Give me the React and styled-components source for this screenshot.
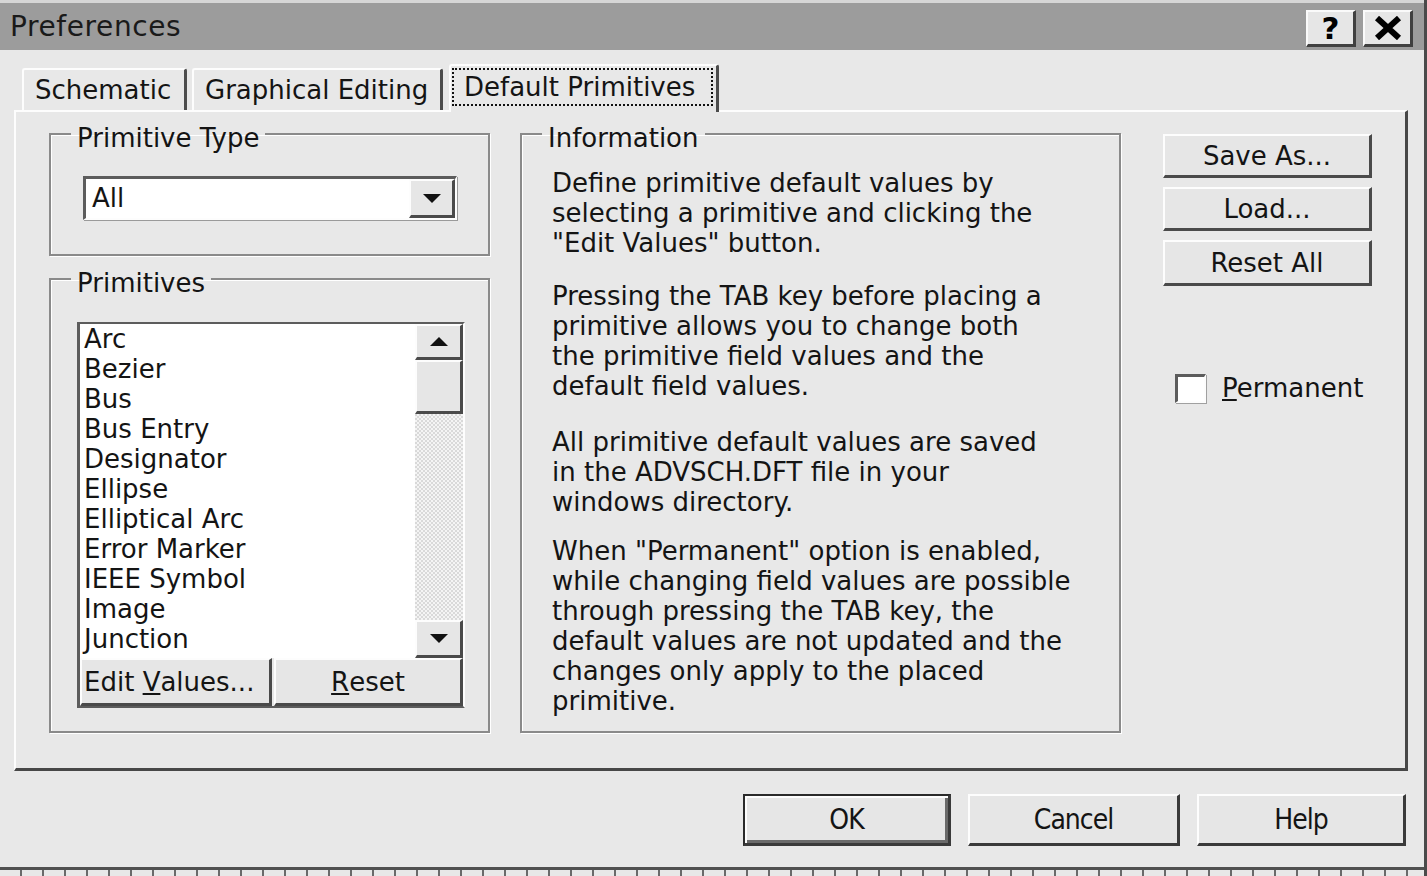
import styled, { createGlobalStyle } from "styled-components";

const GlobalStyle = createGlobalStyle`
  html, body {
    margin: 0;
    padding: 0;
  }
  body {
    background: #e8e8e8;
    font-family: "DejaVu Sans", Verdana, sans-serif;
    color: #141414;
  }
`;

const Dialog = styled.div`
  width: 1427px;
  height: 876px;
  box-sizing: border-box;
  display: flex;
  flex-direction: column;
  background: #e8e8e8;
  border-right: 3px solid #4a4a4a;
  overflow: hidden;
`;

const TitleBar = styled.div`
  height: 50px;
  box-sizing: border-box;
  border-top: 3px solid #d6d6d6;
  background: #9c9c9c;
  display: flex;
  align-items: center;
  justify-content: space-between;
  padding: 0 11px 0 10px;
`;

const Title = styled.span`
  font-size: 28px;
  letter-spacing: 0.6px;
  color: #1a1a1a;
`;

const CaptionButtons = styled.div`
  display: flex;
  gap: 7px;
  margin-top: 4px;
`;

const CaptionButton = styled.div`
  width: 50px;
  height: 37px;
  box-sizing: border-box;
  background: #e6e6e6;
  border-top: 2px solid #fafafa;
  border-left: 2px solid #fafafa;
  border-right: 3px solid #404040;
  border-bottom: 3px solid #404040;
  display: flex;
  align-items: center;
  justify-content: center;
  font-size: 31px;
  font-weight: bold;
  color: #000;
`;

const Body = styled.div`
  padding-top: 14px;
  display: flex;
  flex-direction: column;
`;

const TabStrip = styled.div`
  display: flex;
  align-items: flex-end;
  height: 48px;
  padding-left: 22px;
  margin-bottom: -2px;
  position: relative;
  z-index: 1;
`;

const Tab = styled.div`
  width: ${(p) => p.$w}px;
  height: ${(p) => (p.$active ? 48 : 42)}px;
  margin-left: ${(p) => p.$ml || 0}px;
  margin-bottom: ${(p) => (p.$active ? 0 : 2)}px;
  box-sizing: border-box;
  background: #e8e8e8;
  border-top: 2px solid #fdfdfd;
  border-left: 2px solid #fdfdfd;
  border-right: 3px solid #4c4c4c;
  border-radius: 3px 3px 0 0;
  display: flex;
  align-items: ${(p) => (p.$active ? "flex-start" : "center")};
  padding: ${(p) => (p.$active ? "2px 3px 0 1px" : "0 0 0 11px")};
  font-size: 26px;
  white-space: nowrap;
`;

const FocusRing = styled.div`
  flex: 1;
  height: 38px;
  box-sizing: border-box;
  border: 2px dotted #111;
  display: flex;
  align-items: center;
  padding-left: 10px;
`;

const Panel = styled.div`
  margin-left: 14px;
  width: 1394px;
  height: 661px;
  box-sizing: border-box;
  border-top: 2px solid #fdfdfd;
  border-left: 2px solid #fdfdfd;
  border-right: 3px solid #474747;
  border-bottom: 3px solid #474747;
  display: flex;
  align-items: flex-start;
  padding: 7px 0 0 33px;
`;

const LeftColumn = styled.div`
  width: 441px;
  display: flex;
  flex-direction: column;
  gap: 8px;
`;

const Group = styled.fieldset`
  margin: 0;
  min-width: 0;
  width: ${(p) => p.$w}px;
  height: ${(p) => p.$h}px;
  box-sizing: border-box;
  border: 2px solid #8a8a8a;
  box-shadow: inset 1px 1px 0 #fff, 1px 1px 0 #fff;
  padding: ${(p) => p.$pad};
`;

const Legend = styled.legend`
  margin-left: ${(p) => p.$ml}px;
  padding: 8px 6px 0;
  font-size: 26px;
  line-height: 22px;
`;

const ComboBox = styled.div`
  width: 374px;
  height: 44px;
  box-sizing: border-box;
  display: flex;
  background: #fff;
  border-top: 3px solid #5c5c5c;
  border-left: 3px solid #5c5c5c;
  border-right: 2px solid #fdfdfd;
  border-bottom: 2px solid #fdfdfd;
  box-shadow: 1px 1px 0 #9a9a9a;
`;

const ComboText = styled.div`
  flex: 1;
  padding-left: 6px;
  font-size: 26px;
  line-height: 39px;
`;

const ArrowButton = styled.div`
  width: ${(p) => p.$w || 46}px;
  height: ${(p) => (p.$h ? `${p.$h}px` : "100%")};
  box-sizing: border-box;
  background: #e6e6e6;
  border-top: 2px solid #fdfdfd;
  border-left: 2px solid #fdfdfd;
  border-right: 3px solid #4a4a4a;
  border-bottom: 3px solid #4a4a4a;
  display: flex;
  align-items: center;
  justify-content: center;
  flex-shrink: 0;
`;

const ListFrame = styled.div`
  width: 388px;
  height: 386px;
  box-sizing: border-box;
  border-top: 2px solid #5c5c5c;
  border-left: 3px solid #5c5c5c;
  border-right: 2px solid #fdfdfd;
  border-bottom: 2px solid #5c5c5c;
  display: flex;
  flex-direction: column;
`;

const ListArea = styled.div`
  height: 334px;
  display: flex;
  background: #fff;
`;

const Items = styled.ul`
  flex: 1;
  margin: 0;
  padding: 0 0 0 4px;
  list-style: none;
`;

const Item = styled.li`
  font-size: 26px;
  line-height: 30px;
  white-space: nowrap;
`;

const ScrollBar = styled.div`
  width: 48px;
  display: flex;
  flex-direction: column;
`;

const Thumb = styled.div`
  height: 54px;
  box-sizing: border-box;
  background: #e6e6e6;
  border-top: 2px solid #fdfdfd;
  border-left: 2px solid #fdfdfd;
  border-right: 3px solid #4a4a4a;
  border-bottom: 3px solid #4a4a4a;
`;

const Track = styled.div`
  flex: 1;
  background: repeating-conic-gradient(#f4f4f4 0 25%, #d9d9d9 0 50%) 0 0 / 4px 4px;
`;

const ListButtons = styled.div`
  flex: 1;
  display: flex;
  gap: 2px;
`;

const Button = styled.div`
  width: ${(p) => (p.$w ? `${p.$w}px` : "auto")};
  flex: ${(p) => (p.$grow ? 1 : "none")};
  height: ${(p) => p.$h || 44}px;
  box-sizing: border-box;
  background: #e6e6e6;
  border-top: 2px solid #fdfdfd;
  border-left: 2px solid #fdfdfd;
  border-right: 3px solid #4a4a4a;
  border-bottom: 3px solid #4a4a4a;
  display: flex;
  align-items: center;
  justify-content: ${(p) => (p.$left ? "flex-start" : "center")};
  padding-left: ${(p) => (p.$left ? 2 : 0)}px;
  font-size: 26px;
  white-space: nowrap;
`;

const Info = styled.div`
  margin-left: 30px;
`;

const Para = styled.p`
  margin: 0 0 ${(p) => p.$space}px;
  font-size: 26px;
  line-height: 30px;
  white-space: nowrap;
`;

const RightColumn = styled.div`
  margin: 15px 0 0 42px;
  width: 209px;
  display: flex;
  flex-direction: column;
  gap: 9px;
`;

const CheckRow = styled.label`
  display: flex;
  align-items: center;
  margin-top: 78px;
  padding-left: 12px;
  font-size: 26px;
  line-height: 30px;
  gap: 16px;
`;

const CheckBox = styled.span`
  width: 31px;
  height: 29px;
  box-sizing: border-box;
  background: #fff;
  border-top: 3px solid #5c5c5c;
  border-left: 3px solid #5c5c5c;
  border-right: 2px solid #fdfdfd;
  border-bottom: 2px solid #fdfdfd;
  box-shadow: 1px 1px 0 #a0a0a0;
`;

const Footer = styled.div`
  height: 96px;
  box-sizing: border-box;
  display: flex;
  justify-content: flex-end;
  align-items: flex-start;
  gap: 17px;
  padding: 23px 18px 0 0;
`;

const DialogButton = styled.div`
  width: ${(p) => p.$w}px;
  height: 52px;
  box-sizing: border-box;
  background: #e6e6e6;
  border-top: 2px solid ${(p) => (p.$default ? "#2a2a2a" : "#fdfdfd")};
  border-left: 2px solid ${(p) => (p.$default ? "#2a2a2a" : "#fdfdfd")};
  border-right: 3px solid #3a3a3a;
  border-bottom: 3px solid #3a3a3a;
  box-shadow: ${(p) =>
    p.$default ? "inset 2px 2px 0 #fdfdfd, inset -3px -3px 0 #6a6a6a" : "none"};
  display: flex;
  align-items: center;
  justify-content: center;
  font-family: "DejaVu Sans Condensed", "Liberation Sans Narrow", "DejaVu Sans", sans-serif;
  font-stretch: condensed;
  font-size: 28px;
  letter-spacing: -1px;
`;

const BottomEdge = styled.div`
  height: 9px;
  box-sizing: border-box;
  border-top: 3px solid #505050;
  background: repeating-linear-gradient(90deg, #e8e8e8 0 20px, #6a6a6a 20px 22px);
`;

function Triangle({ up }) {
  return (
    <svg width="18" height="9" viewBox="0 0 18 9">
      <path d={up ? "M0 9 L9 0 L18 9 Z" : "M0 0 L18 0 L9 9 Z"} fill="#111" />
    </svg>
  );
}

const primitives = [
  "Arc",
  "Bezier",
  "Bus",
  "Bus Entry",
  "Designator",
  "Ellipse",
  "Elliptical Arc",
  "Error Marker",
  "IEEE Symbol",
  "Image",
  "Junction",
];

export default function App() {
  return (
    <>
      <GlobalStyle />
      <Dialog>
        <TitleBar>
          <Title>Preferences</Title>
          <CaptionButtons>
            <CaptionButton>?</CaptionButton>
            <CaptionButton>
              <svg width="30" height="24" viewBox="0 0 30 24">
                <path d="M4 2 L26 22 M26 2 L4 22" stroke="#000" strokeWidth="6" />
              </svg>
            </CaptionButton>
          </CaptionButtons>
        </TitleBar>

        <Body>
          <TabStrip>
            <Tab $w={165}>Schematic</Tab>
            <Tab $w={251} $ml={5}>Graphical Editing</Tab>
            <Tab $w={270} $ml={6} $active>
              <FocusRing>Default Primitives</FocusRing>
            </Tab>
          </TabStrip>

          <Panel>
            <LeftColumn>
              <Group $w={441} $h={137} $pad="27px 0 0 32px">
                <Legend $ml={-12}>Primitive Type</Legend>
                <ComboBox>
                  <ComboText>All</ComboText>
                  <ArrowButton>
                    <Triangle />
                  </ArrowButton>
                </ComboBox>
              </Group>

              <Group $w={441} $h={469} $pad="28px 0 0 26px">
                <Legend $ml={-6}>Primitives</Legend>
                <ListFrame>
                  <ListArea>
                    <Items>
                      {primitives.map((name) => (
                        <Item key={name}>{name}</Item>
                      ))}
                    </Items>
                    <ScrollBar>
                      <ArrowButton $w={48} $h={36}>
                        <Triangle up />
                      </ArrowButton>
                      <Thumb />
                      <Track />
                      <ArrowButton $w={48} $h={38}>
                        <Triangle />
                      </ArrowButton>
                    </ScrollBar>
                  </ListArea>
                  <ListButtons>
                    <Button $w={192} $h={48} $left>
                      Edit&nbsp;<u>V</u>alues...
                    </Button>
                    <Button $h={48} $grow>
                      <u>R</u>eset
                    </Button>
                  </ListButtons>
                </ListFrame>
              </Group>
            </LeftColumn>

            <Info>
              <Group $w={601} $h={614} $pad="19px 0 0 30px">
                <Legend $ml={-10}>Information</Legend>
                <Para $space={23}>
                  Define primitive default values by
                  <br />
                  selecting a primitive and clicking the
                  <br />
                  "Edit Values" button.
                </Para>
                <Para $space={26}>
                  Pressing the TAB key before placing a
                  <br />
                  primitive allows you to change both
                  <br />
                  the primitive field values and the
                  <br />
                  default field values.
                </Para>
                <Para $space={19}>
                  All primitive default values are saved
                  <br />
                  in the ADVSCH.DFT file in your
                  <br />
                  windows directory.
                </Para>
                <Para $space={0}>
                  When "Permanent" option is enabled,
                  <br />
                  while changing field values are possible
                  <br />
                  through pressing the TAB key, the
                  <br />
                  default values are not updated and the
                  <br />
                  changes only apply to the placed
                  <br />
                  primitive.
                </Para>
              </Group>
            </Info>

            <RightColumn>
              <Button $w={209}>Save As...</Button>
              <Button $w={209}>Load...</Button>
              <Button $w={209} $h={46}>
                Reset All
              </Button>
              <CheckRow>
                <CheckBox />
                <span>
                  <u>P</u>ermanent
                </span>
              </CheckRow>
            </RightColumn>
          </Panel>

          <Footer>
            <DialogButton $w={208} $default>
              OK
            </DialogButton>
            <DialogButton $w={212}>Cancel</DialogButton>
            <DialogButton $w={209}>Help</DialogButton>
          </Footer>
        </Body>
        <BottomEdge />
      </Dialog>
    </>
  );
}
